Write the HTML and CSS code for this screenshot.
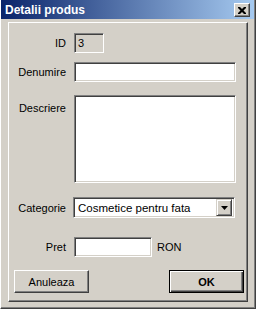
FILE: index.html
```html
<!DOCTYPE html>
<html lang="ro">
<head>
    <meta charset="UTF-8">
    <title>Detalii produs</title>
    <link rel="stylesheet" href="styles.css">
</head>
<body>
    <div class="window">
        <div class="titlebar">
            <span class="title">Detalii produs</span>
            <div class="close-btn">
                <svg width="8" height="7" viewBox="0 0 8 7">
                    <path d="M0 0h2l2 2 2-2h2v1l-2.5 2.5L8 6v1H6L4 5 2 7H0V6l2.5-2.5L0 1z" fill="#000"/>
                </svg>
            </div>
        </div>

        <div class="panel">
            <div class="row row-id">
                <label class="lbl">ID</label>
                <div class="field field-id">3</div>
            </div>
            <div class="row row-name">
                <label class="lbl">Denumire</label>
                <div class="field field-wide"></div>
            </div>
            <div class="row row-desc">
                <label class="lbl lbl-top">Descriere</label>
                <div class="field field-wide field-area"></div>
            </div>
            <div class="row row-cat">
                <label class="lbl">Categorie</label>
                <div class="field field-wide combo">
                    <span class="combo-text">Cosmetice pentru fata</span>
                    <span class="combo-btn">
                        <svg width="7" height="4" viewBox="0 0 7 4"><path d="M0 0h7L3.5 4z" fill="#000"/></svg>
                    </span>
                </div>
            </div>
            <div class="row row-price">
                <label class="lbl">Pret</label>
                <div class="field field-price"></div>
                <span class="unit">RON</span>
            </div>
            <div class="buttons">
                <div class="btn">Anuleaza</div>
                <div class="btn btn-default">OK</div>
            </div>
        </div>
    </div>
</body>
</html>
```

FILE: styles.css
```css
* {
    margin: 0;
    padding: 0;
    box-sizing: border-box;
}
body {
    background-color: #d4d0c8;
    font-family: 'Liberation Sans', Arial, sans-serif;
    font-size: 11px;
    color: #000;
}
.window {
    width: 256px;
    height: 309px;
    background-color: #d4d0c8;
    border-left: 1px solid #fff;
    border-right: 1px solid #404040;
    border-bottom: 1px solid #404040;
    box-shadow: inset -1px -1px #808080;
}
.titlebar {
    height: 19px;
    margin-right: 1px;
    background: linear-gradient(to right, #0a246a, #a6caf0);
    display: flex;
    align-items: center;
    justify-content: space-between;
    padding: 0 4px 0 4px;
}
.title {
    color: #fff;
    font-weight: bold;
    font-size: 12px;
}
.close-btn {
    width: 16px;
    height: 14px;
    background-color: #d4d0c8;
    border: 1px solid;
    border-color: #fff #404040 #404040 #fff;
    box-shadow: inset -1px -1px #808080;
    display: flex;
    align-items: center;
    justify-content: center;
    margin-top: 1px;
}
.panel {
    margin: 3px 7px 0 7px;
    height: 280px;
    border: 1px solid;
    border-color: #fff #404040 #404040 #fff;
    box-shadow: inset -1px -1px #808080;
}
.row {
    display: flex;
    align-items: center;
}
.lbl {
    width: 57px;
    margin-right: 8px;
    text-align: right;
}
.lbl-top {
    align-self: flex-start;
    padding-top: 7px;
}
.row-id { margin-top: 10px; }
.row-name { margin-top: 9px; }
.row-desc { margin-top: 13px; }
.row-cat { margin-top: 14px; }
.row-price { margin-top: 19px; }
.field {
    height: 20px;
    background-color: #fff;
    border: 1px solid;
    border-color: #808080 #fff #fff #808080;
    box-shadow: inset 1px 1px #404040, inset -1px -1px #d4d0c8;
    padding: 3px 3px;
    line-height: 12px;
}
.field-id {
    width: 30px;
    background-color: #d4d0c8;
}
.field-wide {
    width: 162px;
}
.field-area {
    height: 88px;
}
.field-price {
    width: 78px;
}
.combo {
    height: 21px;
    margin-left: -1px;
    display: flex;
    align-items: center;
    justify-content: space-between;
    padding: 2px;
}
.combo-text {
    padding-left: 2px;
    font-size: 11.5px;
}
.combo-btn {
    width: 16px;
    height: 17px;
    background-color: #d4d0c8;
    border: 1px solid;
    border-color: #d4d0c8 #404040 #404040 #d4d0c8;
    box-shadow: inset 1px 1px #fff, inset -1px -1px #808080;
    display: flex;
    align-items: center;
    justify-content: center;
}
.unit {
    margin-left: 5px;
}
.buttons {
    display: flex;
    justify-content: space-between;
    margin-top: 13px;
    padding: 0 3px 0 5px;
}
.btn {
    width: 75px;
    height: 23px;
    background-color: #d4d0c8;
    border: 1px solid;
    border-color: #fff #404040 #404040 #fff;
    box-shadow: inset -1px -1px #808080;
    display: flex;
    align-items: center;
    justify-content: center;
}
.btn-default {
    font-weight: bold;
    border: 1px solid #000;
    box-shadow: inset 1px 1px #fff, inset -1px -1px #404040, inset -2px -2px #808080;
}
```
